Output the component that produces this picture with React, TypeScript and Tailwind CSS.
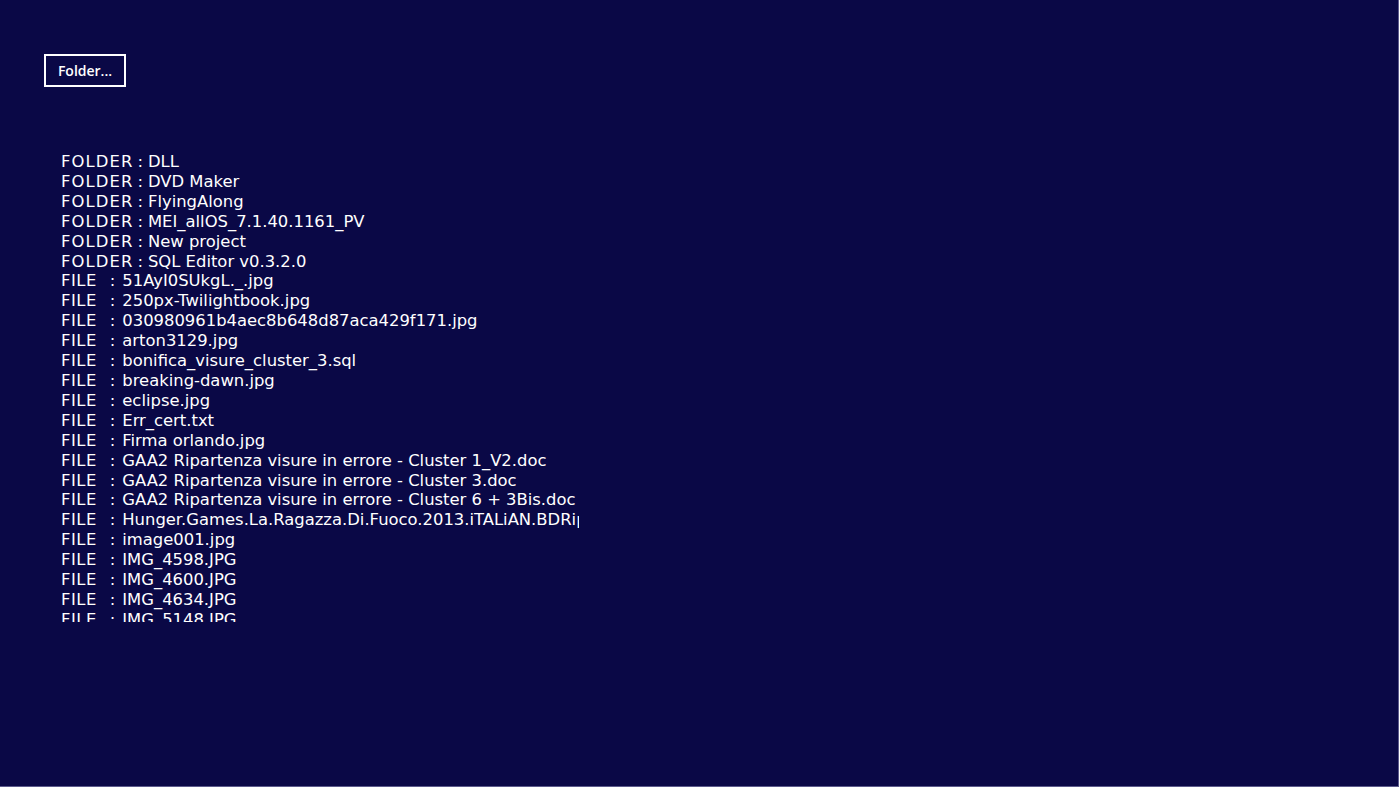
type Entry = { kind: "FOLDER" | "FILE"; name: string };

const folders = ["DLL", "DVD Maker", "FlyingAlong", "MEI_allOS_7.1.40.1161_PV", "New project", "SQL Editor v0.3.2.0"];
const files = [
  "51AyI0SUkgL._.jpg",
  "250px-Twilightbook.jpg",
  "030980961b4aec8b648d87aca429f171.jpg",
  "arton3129.jpg",
  "bonifica_visure_cluster_3.sql",
  "breaking-dawn.jpg",
  "eclipse.jpg",
  "Err_cert.txt",
  "Firma orlando.jpg",
  "GAA2 Ripartenza visure in errore - Cluster 1_V2.doc",
  "GAA2 Ripartenza visure in errore - Cluster 3.doc",
  "GAA2 Ripartenza visure in errore - Cluster 6 + 3Bis.doc",
  "Hunger.Games.La.Ragazza.Di.Fuoco.2013.iTALiAN.BDRip.XviD-TRL.avi",
  "image001.jpg",
  "IMG_4598.JPG",
  "IMG_4600.JPG",
  "IMG_4634.JPG",
  "IMG_5148.JPG",
  "IMG_5150.JPG",
];

const entries: Entry[] = [
  ...folders.map((name) => ({ kind: "FOLDER" as const, name })),
  ...files.map((name) => ({ kind: "FILE" as const, name })),
];

export default function App() {
  return (
    <div className="h-[787px] w-[1399px] overflow-hidden border-r border-b border-[#5d5b8c] bg-[#0a0846] text-white">
      <div className="pl-[44px] pt-[54px]">
        <button className="h-[33px] w-[82px] border-2 border-white font-['Open_Sans',sans-serif] text-[14px] font-semibold leading-none">
          Folder...
        </button>
      </div>

      <div className="ml-[61px] mt-[65px] h-[470px] w-[518px] overflow-hidden font-['DejaVu_Sans',sans-serif] text-[16.4px] leading-[19.9px]">
        {entries.map((e, i) => (
          <div key={i} className="flex whitespace-pre">
            {e.kind === "FOLDER" ? (
              <>
                <span className="tracking-[1.1px]">FOLDER</span>
                <span className="ml-[4px]">:</span>
                <span className="ml-[5px]">{e.name}</span>
              </>
            ) : (
              <>
                <span className="tracking-[0.5px]">FILE</span>
                <span className="ml-[13px]">:</span>
                <span className="ml-[7px]">{e.name}</span>
              </>
            )}
          </div>
        ))}
      </div>
    </div>
  );
}
